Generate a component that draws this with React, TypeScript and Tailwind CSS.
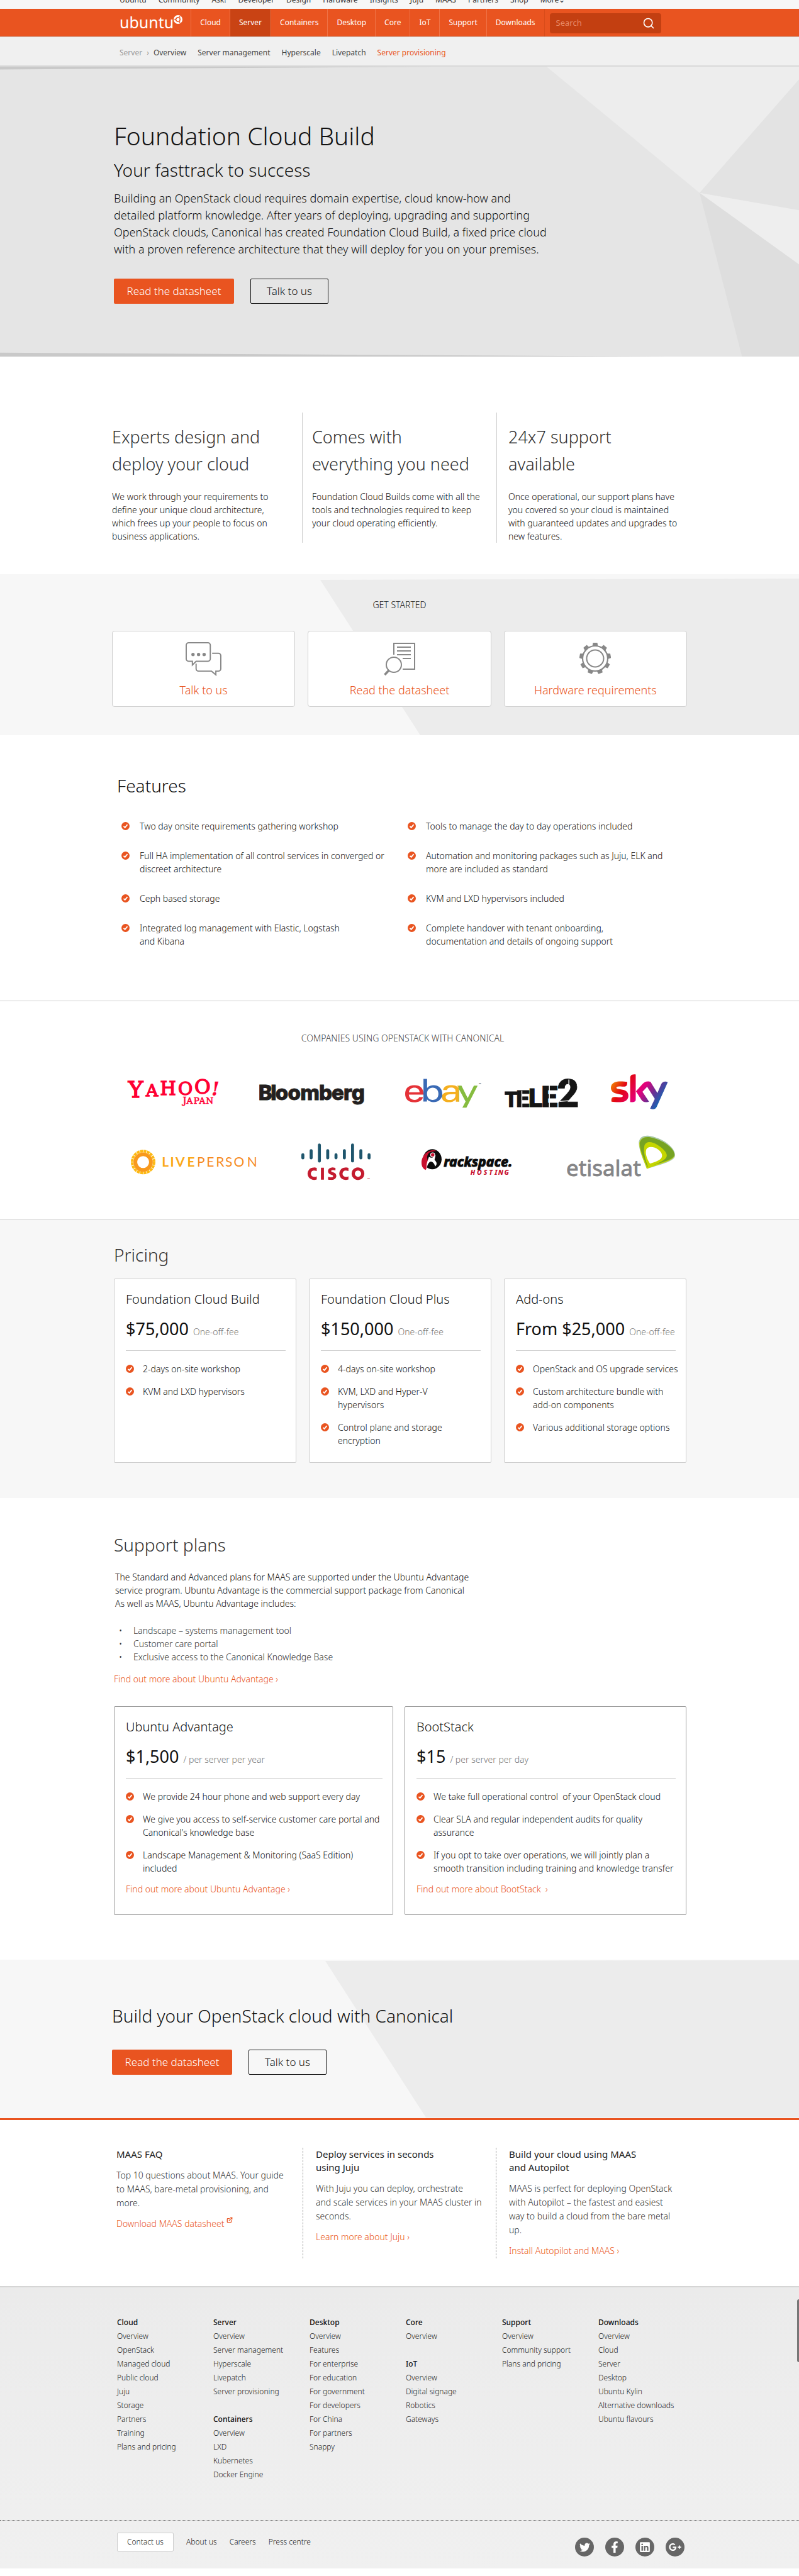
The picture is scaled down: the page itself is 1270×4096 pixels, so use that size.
import React from "react";
import { ExternalLink, Search } from "lucide-react";
import { FaFacebookF, FaGooglePlusG, FaLinkedin, FaTwitter } from "react-icons/fa";
import { SiCisco, SiEbay, SiSky } from "react-icons/si";

const wrap = "mx-auto w-full max-w-[914px]";
const h2 = "text-[28px] leading-9 font-light";
const body = "text-[14px] leading-[21px] font-light";
const link = "text-[#e95420] hover:underline";

function Lines({ text }: { text: string }) {
  return (
    <>
      {text.split("\n").map((line, i) => (
        <React.Fragment key={i}>
          {i > 0 && <br />}
          {line}
        </React.Fragment>
      ))}
    </>
  );
}

function Check() {
  return (
    <svg viewBox="0 0 12 12" className="mt-1 size-[13px] shrink-0" aria-hidden="true">
      <circle cx="6" cy="6" r="6" fill="#e95420" />
      <path d="M3.2 6.3l2 1.9 3.6-4.4" fill="none" stroke="#fff" strokeWidth="1.6" />
    </svg>
  );
}

function TopStrip() {
  const items = ["Ubuntu", "Community", "Ask!", "Developer", "Design", "Hardware", "Insights", "Juju", "MAAS", "Partners", "Shop", "More⌄"];
  return (
    <div className="h-3.5 overflow-hidden bg-[#f7f7f7]">
      <nav aria-label="Ubuntu sites" className={`${wrap} -mt-2 flex gap-[19px] pl-3 text-[12px] leading-4 text-[#333]`}>
        {items.map((t) => (
          <a key={t} href="#">{t}</a>
        ))}
      </nav>
    </div>
  );
}

function CircleOfFriends() {
  return (
    <svg viewBox="0 0 26 26" className="mt-2.5 size-3.5" aria-hidden="true">
      <circle cx="13" cy="13" r="13" fill="#fff" />
      <circle cx="13" cy="13" r="6" fill="none" stroke="#e95420" strokeWidth="3" strokeDasharray="10.6 2" strokeDashoffset="5.3" />
      <circle cx="4.6" cy="13" r="2.2" fill="#e95420" />
      <circle cx="17.4" cy="5.4" r="2.2" fill="#e95420" />
      <circle cx="17.4" cy="20.6" r="2.2" fill="#e95420" />
    </svg>
  );
}

function MainNav() {
  const items = ["Cloud", "Server", "Containers", "Desktop", "Core", "IoT", "Support", "Downloads"];
  return (
    <header className="border-b border-[#c9c4c1] bg-[#e95420]">
      <div className={`${wrap} flex h-11 pl-3`}>
        <a href="#" className="mr-[13px] flex text-white" aria-label="ubuntu">
          <span className="text-[25px] leading-[43px]">ubuntu</span>
          <CircleOfFriends />
        </a>
        <nav aria-label="Main" className="flex border-r border-[#d94c1a]">
          {items.map((t) => (
            <a
              key={t}
              href="#"
              className={`border-l border-[#ef7347] px-3.5 text-[12px] leading-[44px] text-white ${t === "Server" ? "bg-[#c94314]" : ""}`}
            >
              {t}
            </a>
          ))}
        </nav>
        <form role="search" className="mt-[7px] ml-2 flex h-8 w-[177px] items-center rounded-sm bg-[#c33f11] px-2.5">
          <input aria-label="Search" placeholder="Search" className="w-full min-w-0 bg-transparent text-[13px] text-white outline-none placeholder:text-[#e88a66]" />
          <button type="button" aria-label="Submit search" className="text-white">
            <Search size={20} strokeWidth={2} />
          </button>
        </form>
      </div>
    </header>
  );
}

function SubNav() {
  return (
    <nav aria-label="Server" className="border-b-2 border-[#d9d9d9] bg-[#f0f0f0]">
      <div className={`${wrap} flex h-[45px] items-center gap-[18px] pt-1 pl-3 text-[12px] text-[#444]`}>
        <span className="flex gap-[7px]">
          <a href="#" className="text-[#999]">Server</a>
          <span className="text-[#999]">›</span>
          <a href="#">Overview</a>
        </span>
        <a href="#">Server management</a>
        <a href="#">Hyperscale</a>
        <a href="#">Livepatch</a>
        <a href="#" className="text-[#e95420]">Server provisioning</a>
      </div>
    </nav>
  );
}

function Actions() {
  return (
    <div className="flex gap-[26px] text-[17px] font-light">
      <button className="h-10 w-[191px] rounded-xs bg-[#e95420] text-white">Read the datasheet</button>
      <button className="h-10 w-[124px] rounded-xs border border-[#111] text-[#111]">Talk to us</button>
    </div>
  );
}

function Hero() {
  return (
    <section className="relative bg-[#e5e5e5] text-[#111]">
      <svg viewBox="0 0 1431 519" preserveAspectRatio="none" className="absolute inset-0 size-full" aria-hidden="true">
        <path d="M979 0H1431V23L1253 226Z" fill="#ededed" />
        <path d="M1431 23V257L1253 226Z" fill="#e3e3e3" />
        <path d="M1253 226L1431 257V354Z" fill="#eeeeee" />
        <path d="M1253 226L1431 354V519H1329Z" fill="#dedede" />
        <path d="M0 0H780L0 5Z" fill="#c9c9c9" />
        <path d="M0 512L1200 519H0Z" fill="#c9c9c9" />
      </svg>
      <div className={`${wrap} relative pt-[86px] pb-[84px] pl-[3px]`}>
        <h1 className="text-[39px] leading-[48px] font-light">Foundation Cloud Build</h1>
        <p className={`${h2} mt-3`}>Your fasttrack to success</p>
        <p className="mt-3.5 mb-[33px] text-[18px] leading-[27px] font-light">
          <Lines
            text={
              "Building an OpenStack cloud requires domain expertise, cloud know-how and\ndetailed platform knowledge. After years of deploying, upgrading and supporting\nOpenStack clouds, Canonical has created Foundation Cloud Build, a fixed price cloud\nwith a proven reference architecture that they will deploy for you on your premises."
            }
          />
        </p>
        <Actions />
      </div>
    </section>
  );
}

function Benefits() {
  return (
    <section className="bg-white pt-[89px] pb-[50px]">
      <div className={`${wrap} grid grid-cols-[303fr_309fr_302fr] divide-x divide-[#cdcdcd]`}>
        <Benefit title={"Experts design and\ndeploy your cloud"} text={"We work through your requirements to\ndefine your unique cloud architecture,\nwhich frees up your people to focus on\nbusiness applications."} pad="" />
        <Benefit title={"Comes with\neverything you need"} text={"Foundation Cloud Builds come with all the\ntools and technologies required to keep\nyour cloud operating efficiently."} pad="pl-[15px]" />
        <Benefit title={"24x7 support\navailable"} text={"Once operational, our support plans have\nyou covered so your cloud is maintained\nwith guaranteed updates and upgrades to\nnew features."} pad="pl-[18px]" />
      </div>
    </section>
  );
}

function Benefit({ title, text, pad }: { title: string; text: string; pad: string }) {
  return (
    <div className={`pt-[17px] ${pad}`}>
      <h2 className="text-[27px] leading-[43px] font-light text-[#333]">
        <Lines text={title} />
      </h2>
      <p className={`${body} mt-5 text-[#111]`}>
        <Lines text={text} />
      </p>
    </div>
  );
}

function TalkIcon() {
  return (
    <svg viewBox="0 0 58 55" className="h-[54px]" fill="none" stroke="#888" strokeWidth="2" aria-hidden="true">
      <path d="M5 1h31a4 4 0 0 1 4 4v22a4 4 0 0 1-4 4H17l-6 6v-6H5a4 4 0 0 1-4-4V5a4 4 0 0 1 4-4z" />
      <path d="M43 18h10a4 4 0 0 1 4 4v21a4 4 0 0 1-4 4h-4v6l-7-6H21a4 4 0 0 1-4-4v-8" />
      <g fill="#888" stroke="none">
        <circle cx="12" cy="20" r="2.7" />
        <circle cx="21" cy="20" r="2.7" />
        <circle cx="30" cy="20" r="2.7" />
      </g>
    </svg>
  );
}

function DatasheetIcon() {
  return (
    <svg viewBox="0 0 50 54" className="h-[54px]" fill="none" stroke="#888" strokeWidth="2" aria-hidden="true">
      <path d="M16 20V2h33v41H30M21 8h22M21 14h22M21 20h22M30 26h13" />
      <circle cx="16" cy="36" r="12" />
      <path d="M8 45l-6.500 7" strokeWidth="3.500" />
    </svg>
  );
}

function GearIcon() {
  return (
    <svg viewBox="0 0 50 54" className="h-[54px]" fill="none" stroke="#888" aria-hidden="true">
      <circle cx="25" cy="26" r="20" strokeWidth="2.200" />
      <circle cx="25" cy="26" r="13.500" strokeWidth="2" />
      <g fill="#888" stroke="none">
        {[0, 40, 80, 120, 160, 200, 240, 280, 320].map((a) => (
          <path key={a} d="M21.500 1h7l.8 5h-8.600z" transform={`rotate(${a} 25 26)`} />
        ))}
      </g>
    </svg>
  );
}

function GetStarted() {
  const cards = [
    { label: "Talk to us", icon: <TalkIcon /> },
    { label: "Read the datasheet", icon: <DatasheetIcon /> },
    { label: "Hardware requirements", icon: <GearIcon /> },
  ];
  return (
    <section className="relative bg-[#f7f7f7]">
      <svg viewBox="0 0 1270 257" preserveAspectRatio="none" className="absolute inset-0 size-full" aria-hidden="true">
        <path d="M509 9L1270 7V257H668Z" fill="#ececec" />
      </svg>
      <div className={`${wrap} relative pt-[38px] pb-[45px]`}>
        <h2 className="text-center text-[14px] leading-[21px] font-light text-[#111]">GET STARTED</h2>
        <div className="mt-[31px] grid grid-cols-3 gap-5">
          {cards.map((c) => (
            <a key={c.label} href="#" className="flex flex-col items-center rounded-sm border border-[#cdcdcd] bg-white pt-[17px] pb-3">
              {c.icon}
              <span className="mt-[9px] text-[18px] leading-[27px] font-light text-[#e95420]">{c.label}</span>
            </a>
          ))}
        </div>
      </div>
    </section>
  );
}

function Features() {
  const items = [
    "Two day onsite requirements gathering workshop",
    "Tools to manage the day to day operations included",
    "Full HA implementation of all control services in converged or\ndiscreet architecture",
    "Automation and monitoring packages such as Juju, ELK and\nmore are included as standard",
    "Ceph based storage",
    "KVM and LXD hypervisors included",
    "Integrated log management with Elastic, Logstash\nand Kibana",
    "Complete handover with tenant onboarding,\ndocumentation and details of ongoing support",
  ];
  return (
    <section className="border-b border-[#cdcdcd] bg-white pt-[62px] pb-[84px] text-[#111]">
      <div className={wrap}>
        <h2 className={`${h2} pl-2`}>Features</h2>
        <ul className={`${body} mt-9 grid grid-cols-[455fr_444fr] gap-y-[26px] pl-[15px]`}>
          {items.map((t) => (
            <li key={t} className="flex gap-4">
              <Check />
              <span>
                <Lines text={t} />
              </span>
            </li>
          ))}
        </ul>
      </div>
    </section>
  );
}

function Logos() {
  return (
    <div className={wrap}>
      <div className="mt-11 flex h-[65px] pl-6">
        <svg viewBox="52 35 500 220" className="h-full" role="img" aria-label="Yahoo! Japan" fill="#ff0033" stroke="#ff0033" strokeWidth="5" fontFamily="'DejaVu Serif', serif">
          <text x="58" y="172" fontSize="122">Y</text>
          <text x="154" y="165" fontSize="90">A</text>
          <text x="230" y="157" fontSize="98">H</text>
          <text x="326" y="156" fontSize="96">O</text>
          <text x="414" y="150" fontSize="106">O</text>
          <text x="506" y="160" fontSize="98" fontStyle="italic" fontWeight="700" strokeWidth="1">!</text>
          <text x="352" y="203" fontSize="50" strokeWidth="2">J</text>
          <text x="372 410 440 476" y="203" fontSize="46" strokeWidth="2">APAN</text>
        </svg>
        <svg viewBox="758 35 575 220" className="ml-[62px] h-full" role="img" aria-label="Bloomberg" fill="#231f20" stroke="#231f20" strokeWidth="3">
          <text x="754 820 845 912 979 1080 1147 1212 1255" y="185" fontSize="112" fontWeight="800" fontFamily="Inter, sans-serif">Bloomberg</text>
        </svg>
        <svg viewBox="27 35 415 220" className="ml-[62px] h-full" role="img" aria-label="ebay">
          <defs>
            <linearGradient id="ebay">
              <stop offset="0.250" stopColor="#e53238" />
              <stop offset="0.250" stopColor="#3a6ab5" />
              <stop offset="0.510" stopColor="#3a6ab5" />
              <stop offset="0.510" stopColor="#f5af1f" />
              <stop offset="0.735" stopColor="#f5af1f" />
              <stop offset="0.735" stopColor="#86bc3f" />
            </linearGradient>
          </defs>
          <SiEbay x="27" y="-47" size={390} fill="url(#ebay)" />
          <text x="421" y="104" fontSize="14" fontFamily="Liberation Sans, sans-serif">™</text>
        </svg>
        <svg viewBox="562 35 397 220" className="ml-9 h-full" role="img" aria-label="Tele2" fill="#151515" stroke="#151515" strokeWidth="3" fontFamily="Roboto, sans-serif" fontWeight="900">
          <text y="221" fontSize="112" x="562">T</text>
          <text y="221" fontSize="128" x="624">E</text>
          <text y="221" fontSize="138" x="691">L</text>
          <text y="221" fontSize="158" x="759">E</text>
          <text y="221" fontSize="204" x="845">2</text>
          <path d="M858 192l100-8M908 74v40M655 224v-90M803 224V100" stroke="#fff" strokeWidth="5" />
        </svg>
        <svg viewBox="1137 35 308 220" className="ml-[52px] h-full" role="img" aria-label="sky">
          <defs>
            <linearGradient id="sky" x1="0" y1="0.200" x2="1" y2="0.600">
              <stop offset="0" stopColor="#f39200" />
              <stop offset="0.250" stopColor="#e30613" />
              <stop offset="0.550" stopColor="#e5007d" />
              <stop offset="0.750" stopColor="#6f2c91" />
              <stop offset="1" stopColor="#0071bc" />
            </linearGradient>
          </defs>
          <SiSky x="1137" y="-13" size={306} fill="url(#sky)" />
        </svg>
      </div>
      <div className="mt-[34px] flex h-[76px] pl-[30px]">
        <svg viewBox="73 370 690 257" className="h-full" role="img" aria-label="LivePerson" fontFamily="Lato, sans-serif">
          <circle cx="139" cy="518" r="59" fill="none" stroke="#fdb913" strokeWidth="14" strokeDasharray="15.500 3.034" />
          <circle cx="139" cy="518" r="42" fill="none" stroke="#f8991d" strokeWidth="20" />
          <text x="240 284 313 376" y="543" fontSize="71" fontWeight="700" fill="#fba919">LIVE</text>
          <text x="428 480 530 580 626 698" y="543" fontSize="71" fill="#f68b1f">PERSON</text>
        </svg>
        <svg viewBox="990 370 375 257" className="ml-[67px] h-full" role="img" aria-label="Cisco">
          <defs>
            <linearGradient id="cisco" x2="0" y2="1">
              <stop offset="0.580" stopColor="#1f566d" />
              <stop offset="0.580" stopColor="#c41b2f" />
            </linearGradient>
          </defs>
          <SiCisco x="990" y="330" size={372} fill="url(#cisco)" />
          <text x="1343" y="614" fontSize="16" fill="#c41b2f" fontFamily="Liberation Sans, sans-serif">™</text>
        </svg>
        <svg viewBox="124 370 500 257" className="ml-20 h-full" role="img" aria-label="Rackspace Hosting" fontFamily="'Noto Sans', sans-serif" fontStyle="italic">
          <ellipse cx="182" cy="503" rx="50" ry="54" fill="#0b0b0b" />
          <path d="M204 458c-38-14-80 20-80 64 0 18 8 32 22 38 8-6 6-30 12-46l-4-20c2-20 10-30 24-32z" fill="#c8102e" />
          <path d="M164 490c14 8 24 4 36-10l-6 26c14 14 14 24 4 36-6-18-20-36-34-20-8 8-10 18-10 30-8-18 2-38 10-62z" fill="#fff" />
          <circle cx="184" cy="479" r="11" fill="#c8102e" stroke="#fff" strokeWidth="4" />
          <text x="243" y="542" fontSize="72" fontWeight="800" fill="#0b0b0b" stroke="#0b0b0b" strokeWidth="3">rackspace.</text>
          <text x="387 422 458 487 517 536 569" y="587" fontSize="36" fontWeight="800" fill="#c8102e">HOSTING</text>
        </svg>
        <svg viewBox="903 370 582 257" className="ml-[83px] h-full" role="img" aria-label="etisalat" fontFamily="'Noto Sans', sans-serif">
          <path d="M1290 410c4-24 22-36 50-34 76 10 146 62 145 106-2 30-62 44-152 72-14-40-44-96-43-144z" fill="#a9c8a8" />
          <path d="M1293 414c6-24 28-34 54-30 74 14 136 62 134 98-2 28-66 42-148 72-14-40-42-96-40-140z" fill="#c5d600" />
          <path d="M1295 414c6-24 28-34 54-30 74 14 134 62 132 94-2 28-66 40-146 66-14-40-42-90-40-130z" fill="#76a323" />
          <path d="M1320 430c8-26 40-24 70-4 36 22 58 48 48 66-10 20-54 36-98 54-12-32-28-82-20-116z" fill="#c5d600" />
          <path d="M1330 450c8-18 40-18 66 2 22 18 24 38 10 50-14 12-36 18-56 24-14-22-28-52-20-76z" fill="#fff" />
          <text x="900" y="592" fontSize="118" fill="#858587" stroke="#858587" strokeWidth="3">etisalat</text>
        </svg>
      </div>
    </div>
  );
}

function Companies() {
  return (
    <section className="bg-white pt-12 pb-[58px]">
      <h2 className="pl-2.5 text-center text-[14px] leading-[21px] font-light text-[#444]">COMPANIES USING OPENSTACK WITH CANONICAL</h2>
      <Logos />
    </section>
  );
}

interface Plan {
  title: string;
  price: string;
  unit: string;
  items: string[];
  more?: string;
}

function PlanCard({ plan, border }: { plan: Plan; border: string }) {
  return (
    <article className={`rounded-xs border bg-white pt-[18px] pr-4 pl-[18px] ${border}`}>
      <h3 className="text-[20px] leading-7 font-light">{plan.title}</h3>
      <p className="mt-[15px] text-[27px] leading-9 whitespace-nowrap">
        {plan.price} <span className="text-[14px] font-light text-[#777]">{plan.unit}</span>
      </p>
      <hr className="mt-[11px] border-[#cdcdcd]" />
      <ul className={`${body} mt-[18px] flex flex-col gap-[15px]`}>
        {plan.items.map((t) => (
          <li key={t} className="flex gap-3.5">
            <Check />
            <span className="whitespace-pre">
              <Lines text={t} />
            </span>
          </li>
        ))}
      </ul>
      {plan.more && (
        <p className={`${body} mt-3`}>
          <a href="#" className={`${link} whitespace-pre`}>{plan.more}</a>
        </p>
      )}
    </article>
  );
}

const pricing: Plan[] = [
  { title: "Foundation Cloud Build", price: "$75,000", unit: "One-off-fee", items: ["2-days on-site workshop", "KVM and LXD hypervisors"] },
  { title: "Foundation Cloud Plus", price: "$150,000", unit: "One-off-fee", items: ["4-days on-site workshop", "KVM, LXD and Hyper-V\nhypervisors", "Control plane and storage\nencryption"] },
  { title: "Add-ons", price: "From $25,000", unit: "One-off-fee", items: ["OpenStack and OS upgrade services", "Custom architecture bundle with\nadd-on components", "Various additional storage options"] },
];

const support: Plan[] = [
  {
    title: "Ubuntu Advantage",
    price: "$1,500",
    unit: "/ per server per year",
    items: ["We provide 24 hour phone and web support every day", "We give you access to self-service customer care portal and\nCanonical's knowledge base", "Landscape Management & Monitoring (SaaS Edition)\nincluded"],
    more: "Find out more about Ubuntu Advantage ›",
  },
  {
    title: "BootStack",
    price: "$15",
    unit: "/ per server per day",
    items: ["We take full operational control  of your OpenStack cloud", "Clear SLA and regular independent audits for quality\nassurance", "If you opt to take over operations, we will jointly plan a\nsmooth transition including training and knowledge transfer"],
    more: "Find out more about BootStack  ›",
  },
];

function Pricing() {
  return (
    <section className="border-t border-[#cdcdcd] bg-[#f7f7f7] pt-[38px] pb-14 text-[#111]">
      <div className={`${wrap} pr-px pl-[3px]`}>
        <h2 className={`${h2} text-[#333]`}>Pricing</h2>
        <div className="mt-5 grid min-h-[293px] grid-cols-3 gap-5">
          {pricing.map((p) => (
            <PlanCard key={p.title} plan={p} border="border-[#cdcdcd]" />
          ))}
        </div>
      </div>
    </section>
  );
}

function Support() {
  return (
    <section className="bg-white pt-14 pb-[71px] text-[#111]">
      <div className={`${wrap} pr-px pl-[3px]`}>
        <h2 className={`${h2} text-[#333]`}>Support plans</h2>
        <p className={`${body} mt-[23px] pl-0.5`}>
          <Lines
            text={
              "The Standard and Advanced plans for MAAS are supported under the Ubuntu Advantage\nservice program. Ubuntu Advantage is the commercial support package from Canonical\nAs well as MAAS, Ubuntu Advantage includes:"
            }
          />
        </p>
        <ul className={`${body} mt-[22px] pl-2 text-[#333]`}>
          {["Landscape – systems management tool", "Customer care portal", "Exclusive access to the Canonical Knowledge Base"].map((t) => (
            <li key={t} className="flex">
              <span className="w-[23px]">•</span>
              {t}
            </li>
          ))}
        </ul>
        <p className={`${body} mt-3.5`}>
          <a href="#" className={link}>Find out more about Ubuntu Advantage ›</a>
        </p>
        <div className="mt-[33px] grid min-h-[332px] grid-cols-[444fr_448fr] gap-[18px]">
          {support.map((p) => (
            <PlanCard key={p.title} plan={p} border="border-[#999]" />
          ))}
        </div>
      </div>
    </section>
  );
}

function CallToAction() {
  return (
    <section className="relative border-b-[3px] border-[#e95420] bg-[#f7f7f7]">
      <svg viewBox="0 0 1270 252" preserveAspectRatio="none" className="absolute inset-0 size-full" aria-hidden="true">
        <path d="M517 2L1270 1V251H677Z" fill="#ececec" />
      </svg>
      <div className={`${wrap} relative pt-[71px] pb-[69px]`}>
        <h2 className={`${h2} mb-9 text-[#111]`}>Build your OpenStack cloud with Canonical</h2>
        <Actions />
      </div>
    </section>
  );
}

function Resources() {
  const para = "mt-3 text-[14px] leading-[22px] font-light text-[#333]";
  const more = "mt-[11px] text-[14px] leading-[22px] font-light";
  const title = "text-[15px] leading-[21px] text-[#222]";
  return (
    <section className="bg-white py-11">
      <div className={`${wrap} grid min-h-44 grid-cols-[303fr_307fr_304fr]`}>
        <div className="pl-[7px]">
          <h3 className={title}>MAAS FAQ</h3>
          <p className={para}><Lines text={"Top 10 questions about MAAS. Your guide\nto MAAS, bare-metal provisioning, and\nmore."} /></p>
          <p className={more}>
            <a href="#" className={link}>
              Download MAAS datasheet <ExternalLink size={10} strokeWidth={3} className="inline align-super" />
            </a>
          </p>
        </div>
        <div className="border-l border-dashed border-[#999] pl-5">
          <h3 className={title}><Lines text={"Deploy services in seconds\nusing Juju"} /></h3>
          <p className={para}><Lines text={"With Juju you can deploy, orchestrate\nand scale services in your MAAS cluster in\nseconds."} /></p>
          <p className={more}><a href="#" className={link}>Learn more about Juju ›</a></p>
        </div>
        <div className="border-l border-dashed border-[#999] pl-5">
          <h3 className={title}><Lines text={"Build your cloud using MAAS\nand Autopilot"} /></h3>
          <p className={para}><Lines text={"MAAS is perfect for deploying OpenStack\nwith Autopilot – the fastest and easiest\nway to build a cloud from the bare metal\nup."} /></p>
          <p className={more}><a href="#" className={link}>Install Autopilot and MAAS ›</a></p>
        </div>
      </div>
    </section>
  );
}

const footerColumns: { title: string; items: string[] }[][] = [
  [{ title: "Cloud", items: ["Overview", "OpenStack", "Managed cloud", "Public cloud", "Juju", "Storage", "Partners", "Training", "Plans and pricing"] }],
  [
    { title: "Server", items: ["Overview", "Server management", "Hyperscale", "Livepatch", "Server provisioning"] },
    { title: "Containers", items: ["Overview", "LXD", "Kubernetes", "Docker Engine"] },
  ],
  [{ title: "Desktop", items: ["Overview", "Features", "For enterprise", "For education", "For government", "For developers", "For China", "For partners", "Snappy"] }],
  [
    { title: "Core", items: ["Overview"] },
    { title: "IoT", items: ["Overview", "Digital signage", "Robotics", "Gateways"] },
  ],
  [{ title: "Support", items: ["Overview", "Community support", "Plans and pricing"] }],
  [{ title: "Downloads", items: ["Overview", "Cloud", "Server", "Desktop", "Ubuntu Kylin", "Alternative downloads", "Ubuntu flavours"] }],
];

function Footer() {
  const social = [
    { label: "Twitter", icon: <FaTwitter size={17} /> },
    { label: "Facebook", icon: <FaFacebookF size={18} /> },
    { label: "LinkedIn", icon: <FaLinkedin size={18} /> },
    { label: "Google+", icon: <FaGooglePlusG size={20} /> },
  ];
  return (
    <footer className="relative border-t-2 border-[#d5d5d5] bg-linear-to-b from-[#ebebeb] to-[#f0f0f0] text-[12px]">
      <span className="absolute top-[19px] right-0 h-[100px] w-[3px] rounded-l-sm bg-[#777]" />
      <div className={`${wrap} flex pt-[45px] pb-[61px] pl-2`}>
        {footerColumns.map((groups, i) => (
          <div key={i} className="flex w-[153px] shrink-0 flex-col gap-[22px] leading-[22px]">
            {groups.map((g) => (
              <div key={g.title}>
                <h4 className="font-medium text-[#111]">{g.title}</h4>
                <ul className="font-light text-[#222]">
                  {g.items.map((t) => (
                    <li key={t}>
                      <a href="#">{t}</a>
                    </li>
                  ))}
                </ul>
              </div>
            ))}
          </div>
        ))}
      </div>
      <div className="border-t border-dotted border-[#666]">
        <div className={`${wrap} flex items-start pt-[19px] pr-1 pb-[19px] pl-2`}>
          <nav aria-label="Company" className="flex items-center gap-5 font-light text-[#222]">
            <a href="#" className="flex h-[30px] w-[90px] items-center justify-center rounded-xs border border-[#cdcdcd] bg-white">Contact us</a>
            <a href="#">About us</a>
            <a href="#">Careers</a>
            <a href="#">Press centre</a>
          </nav>
          <div className="mt-2 ml-auto flex gap-[18px]">
            {social.map((s) => (
              <a key={s.label} href="#" aria-label={s.label} className="flex size-[30px] items-center justify-center rounded-full bg-[#666] text-white">
                {s.icon}
              </a>
            ))}
          </div>
        </div>
      </div>
    </footer>
  );
}

export default function App() {
  return (
    <div className="bg-white pb-3 font-['Noto_Sans',sans-serif]">
      <TopStrip />
      <MainNav />
      <SubNav />
      <main>
        <Hero />
        <Benefits />
        <GetStarted />
        <Features />
        <Companies />
        <Pricing />
        <Support />
        <CallToAction />
        <Resources />
      </main>
      <Footer />
    </div>
  );
}
